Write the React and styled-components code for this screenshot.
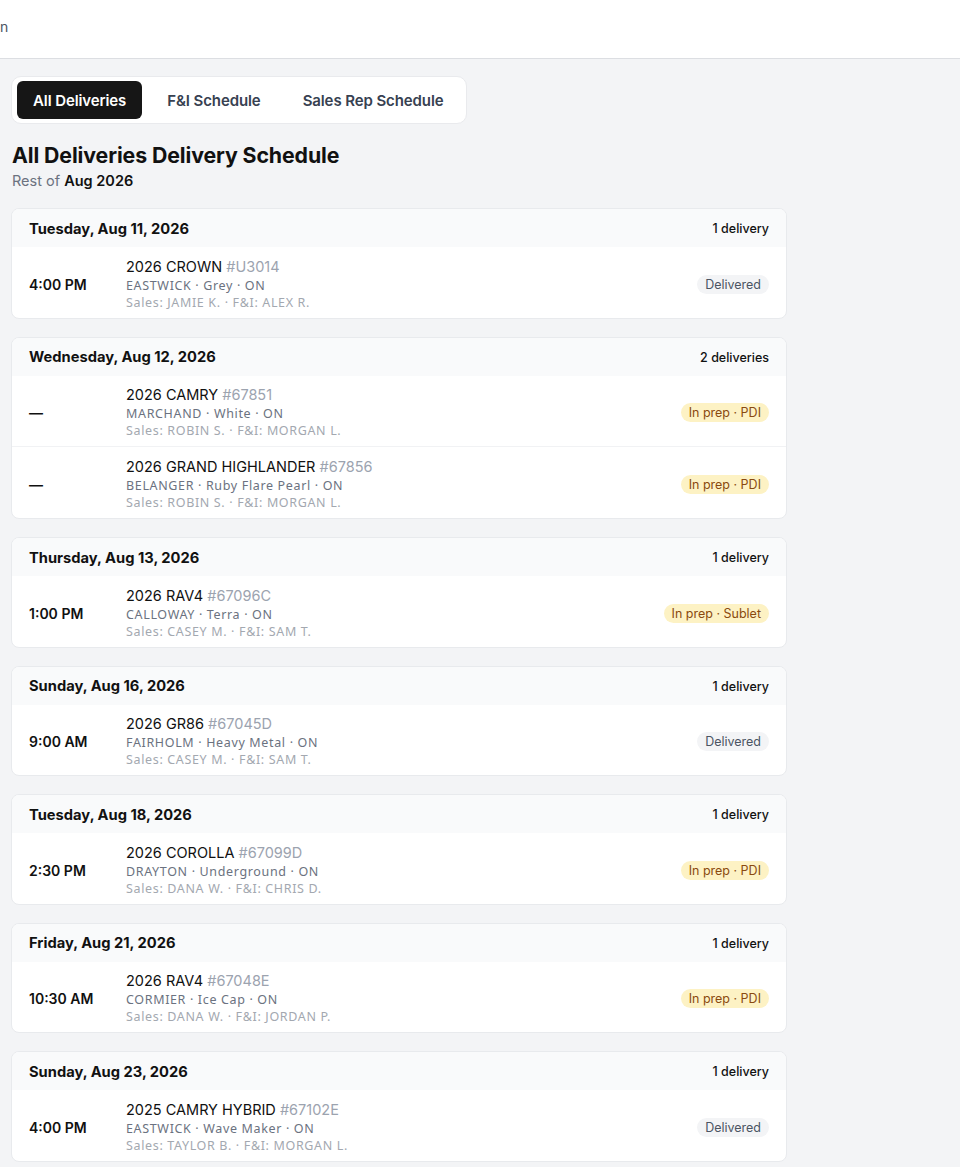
import React from 'react';
import styled, { createGlobalStyle } from 'styled-components';

const GlobalStyle = createGlobalStyle`
  * { box-sizing: border-box; }
  body {
    margin: 0;
    background: #f3f4f6;
    font-family: Inter, "Noto Sans", sans-serif;
    color: #111111;
  }
`;

const TopBar = styled.header`
  height: 59px;
  background: #fff;
  border-bottom: 1px solid #dcdee2;
  display: flex;
  align-items: center;
  padding-bottom: 6px;
  font-size: 14px;
  color: #4b5563;
  overflow: hidden;
`;

const Main = styled.main`
  padding: 17px 0 0 11px;
  width: 787px;
`;

const Tabs = styled.div`
  display: inline-flex;
  background: #fff;
  border: 1px solid #e9eaed;
  border-radius: 10px;
  padding: 4px 5px;
  gap: 4px;
`;

const Tab = styled.button`
  border: none;
  font-family: inherit;
  font-size: 15px;
  font-weight: 600;
  height: 38px;
  padding: 0 ${p => p.$pad}px;
  border-radius: 6px;
  background: ${p => (p.$active ? '#161616' : '#fff')};
  color: ${p => (p.$active ? '#fff' : '#374151')};
  letter-spacing: -0.1px;
`;

const Heading = styled.div`
  margin: 19px 0 17px 1px;
`;

const Title = styled.h1`
  margin: 0;
  font-size: 21.3px;
  font-weight: 700;
  line-height: 24px;
  letter-spacing: -0.1px;
`;

const Sub = styled.div`
  font-size: 14.5px;
  color: #6b7280;
  line-height: 20px;
  margin-top: 4px;
  b { color: #111; font-weight: 600; }
`;

const Card = styled.section`
  background: #fff;
  border: 1px solid #e8eaed;
  border-radius: 8px;
  margin-bottom: 18px;
  overflow: hidden;
`;

const CardHead = styled.div`
  height: 38px;
  background: #f9fafb;
  display: flex;
  align-items: center;
  justify-content: space-between;
  padding: 1px 17px 0;
`;

const DateLabel = styled.div`
  font-size: 14.7px;
  font-weight: 700;
`;

const Count = styled.div`
  font-size: 12.5px;
  font-weight: 500;
`;

const Row = styled.div`
  display: flex;
  align-items: center;
  height: 70.5px;
  padding: 4px 17px 0;
  & + & { border-top: 1px solid #f1f2f4; height: 72px; }
`;

const Time = styled.div`
  width: 97px;
  font-size: 14px;
  font-weight: 600;
`;

const Info = styled.div`
  flex: 1;
  display: flex;
  flex-direction: column;
  padding-bottom: 1px;
`;

const Model = styled.div`
  font-size: 14.5px;
  line-height: 19px;
  margin-bottom: 1px;
  span { color: #9ca3af; }
`;

const Detail = styled.div`
  font-family: "Noto Sans", sans-serif;
  font-size: 12.5px;
  line-height: 17px;
  letter-spacing: 0.65px;
  color: ${p => (p.$light ? '#a3a8b0' : '#6b7280')};
`;

const Badge = styled.span`
  font-size: 12.5px;
  padding: 2px 8px;
  border-radius: 999px;
  background: ${p => (p.$prep ? '#fdf2c4' : '#f3f4f6')};
  color: ${p => (p.$prep ? '#8a4a0f' : '#4b5563')};
`;

const days = [
  { date: 'Tuesday, Aug 11, 2026', items: [
    { time: '4:00 PM', model: '2026 CROWN', stock: '#U3014', detail: 'EASTWICK · Grey · ON', staff: 'Sales: JAMIE K. · F&I: ALEX R.', status: 'Delivered' },
  ] },
  { date: 'Wednesday, Aug 12, 2026', items: [
    { time: '—', model: '2026 CAMRY', stock: '#67851', detail: 'MARCHAND · White · ON', staff: 'Sales: ROBIN S. · F&I: MORGAN L.', status: 'In prep · PDI' },
    { time: '—', model: '2026 GRAND HIGHLANDER', stock: '#67856', detail: 'BELANGER · Ruby Flare Pearl · ON', staff: 'Sales: ROBIN S. · F&I: MORGAN L.', status: 'In prep · PDI' },
  ] },
  { date: 'Thursday, Aug 13, 2026', items: [
    { time: '1:00 PM', model: '2026 RAV4', stock: '#67096C', detail: 'CALLOWAY · Terra · ON', staff: 'Sales: CASEY M. · F&I: SAM T.', status: 'In prep · Sublet' },
  ] },
  { date: 'Sunday, Aug 16, 2026', items: [
    { time: '9:00 AM', model: '2026 GR86', stock: '#67045D', detail: 'FAIRHOLM · Heavy Metal · ON', staff: 'Sales: CASEY M. · F&I: SAM T.', status: 'Delivered' },
  ] },
  { date: 'Tuesday, Aug 18, 2026', items: [
    { time: '2:30 PM', model: '2026 COROLLA', stock: '#67099D', detail: 'DRAYTON · Underground · ON', staff: 'Sales: DANA W. · F&I: CHRIS D.', status: 'In prep · PDI' },
  ] },
  { date: 'Friday, Aug 21, 2026', items: [
    { time: '10:30 AM', model: '2026 RAV4', stock: '#67048E', detail: 'CORMIER · Ice Cap · ON', staff: 'Sales: DANA W. · F&I: JORDAN P.', status: 'In prep · PDI' },
  ] },
  { date: 'Sunday, Aug 23, 2026', items: [
    { time: '4:00 PM', model: '2025 CAMRY HYBRID', stock: '#67102E', detail: 'EASTWICK · Wave Maker · ON', staff: 'Sales: TAYLOR B. · F&I: MORGAN L.', status: 'Delivered' },
  ] },
];

export default function App() {
  return (
    <>
      <GlobalStyle />
      <TopBar>n</TopBar>
      <Main>
        <Tabs>
          <Tab $active $pad={16}>All Deliveries</Tab>
          <Tab $pad={21}>F&amp;I Schedule</Tab>
          <Tab $pad={17}>Sales Rep Schedule</Tab>
        </Tabs>
        <Heading>
          <Title>All Deliveries Delivery Schedule</Title>
          <Sub>Rest of <b>Aug 2026</b></Sub>
        </Heading>
        {days.map(day => (
          <Card key={day.date}>
            <CardHead>
              <DateLabel>{day.date}</DateLabel>
              <Count>{day.items.length} {day.items.length === 1 ? 'delivery' : 'deliveries'}</Count>
            </CardHead>
            {day.items.map(it => (
              <Row key={it.stock}>
                <Time>{it.time}</Time>
                <Info>
                  <Model>{it.model} <span>{it.stock}</span></Model>
                  <Detail>{it.detail}</Detail>
                  <Detail $light>{it.staff}</Detail>
                </Info>
                <Badge $prep={it.status !== 'Delivered'}>{it.status}</Badge>
              </Row>
            ))}
          </Card>
        ))}
      </Main>
    </>
  );
}
